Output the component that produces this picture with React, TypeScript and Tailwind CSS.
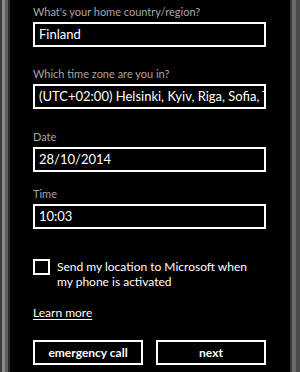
import React from "react";

const font = { fontFamily: 'Lato, "Open Sans", sans-serif' };

function Field({ label, value, top }: { label: string; value: string; top: string }) {
  return (
    <div className={`flex min-w-0 flex-col ${top}`}>
      <div className="h-[16px] text-[11px] leading-[16px] text-[#a6a6a6]">{label}</div>
      <div className="mt-[2px] flex h-[25px] min-w-0 items-center overflow-hidden whitespace-nowrap border-2 border-white pl-[4px] text-[13px] text-white">
        {value}
      </div>
    </div>
  );
}

export default function App() {
  return (
    <div className="flex h-[372px] w-[300px] overflow-hidden bg-black" style={font}>
      <div className="flex h-full w-[10px] shrink-0">
        <div className="w-[2px] bg-[#3c3c3c]" />
        <div className="w-[3px] bg-[#8a8a8a]" />
        <div className="w-[3px] bg-[#5e5e5e]" />
        <div className="w-[2px] bg-[#2a2a2a]" />
      </div>
      <div className="flex min-w-0 flex-1 flex-col pl-[23px] pr-[24px]">
        <Field label="What's your home country/region?" value="Finland" top="mt-[4px]" />
        <Field label="Which time zone are you in?" value="(UTC+02:00) Helsinki, Kyiv, Riga, Sofia, Tallinn, Vilnius" top="mt-[19px]" />
        <Field label="Date" value="28/10/2014" top="mt-[20px]" />
        <Field label="Time" value="10:03" top="mt-[14px]" />
        <div className="mt-[30px] flex items-start">
          <div className="h-[16px] w-[17px] shrink-0 border-2 border-white" />
          <div className="ml-[7px] mt-[0px] text-[12px] leading-[15px] text-white">
            Send my location to Microsoft when
            <br />
            my phone is activated
          </div>
        </div>
        <div className="mt-[16px] text-[12px] leading-[16px] text-white underline underline-offset-2">Learn more</div>
        <div className="mt-[19px] flex gap-[13px]">
          <div className="flex h-[25px] min-w-0 flex-1 items-center justify-center border-2 border-white text-[12px] font-bold text-white">
            emergency call
          </div>
          <div className="flex h-[25px] min-w-0 flex-1 items-center justify-center border-2 border-white text-[12px] font-bold text-white">
            next
          </div>
        </div>
      </div>
      <div className="flex h-full w-[10px] shrink-0">
        <div className="w-[2px] bg-[#3a3a3a]" />
        <div className="w-[4px] bg-[#6a6a6a]" />
        <div className="w-[4px] bg-[#4a4a4a]" />
      </div>
    </div>
  );
}
